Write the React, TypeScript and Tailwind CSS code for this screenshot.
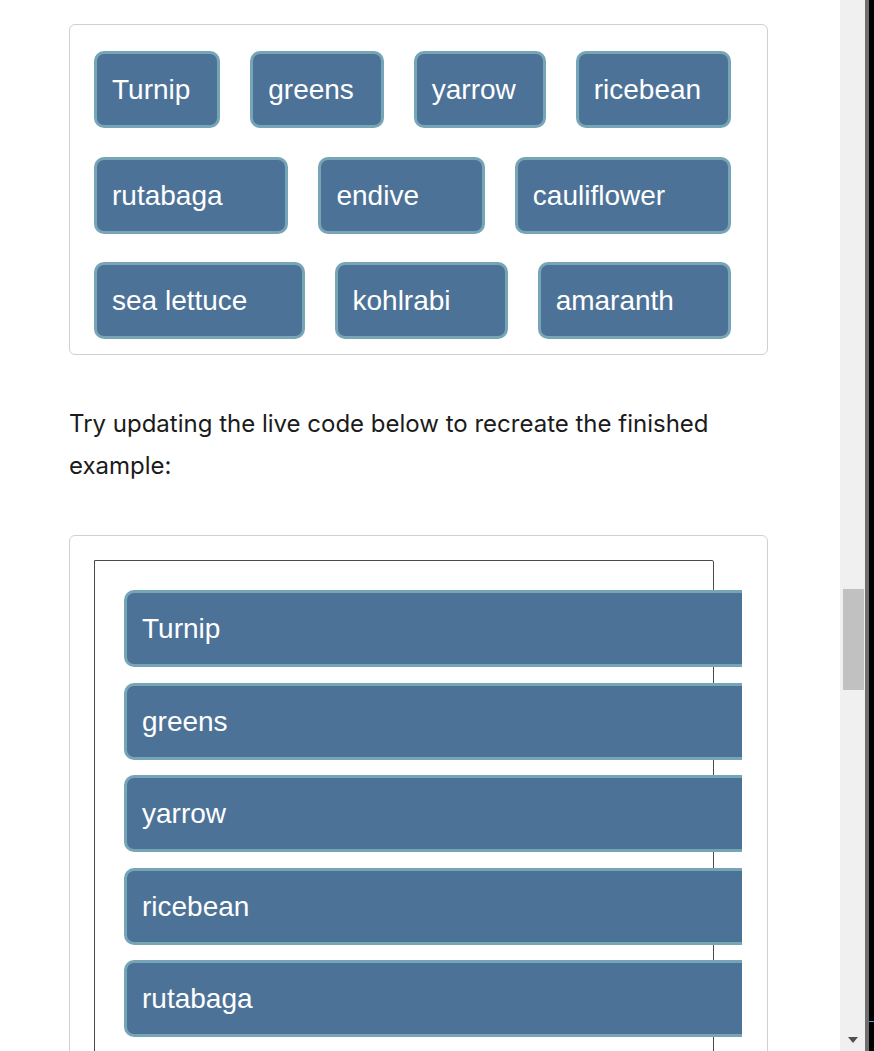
import React from "react";

const wrapItems = [
  "Turnip",
  "greens",
  "yarrow",
  "ricebean",
  "rutabaga",
  "endive",
  "cauliflower",
  "sea lettuce",
  "kohlrabi",
  "amaranth",
];

const listItems = ["Turnip", "greens", "yarrow", "ricebean", "rutabaga"];

// shared look of the veg boxes
const itemClass =
  "border-[3px] border-[#76a6b6] bg-[#4d7298] rounded-[10px] px-[15px] py-[15px] text-[28px] leading-[41px] text-white whitespace-nowrap";

const App = () => {
  return (
    <div className="flex h-[1051px] w-[874px] overflow-hidden bg-white">
      {/* page content */}
      <div className="w-[840px] shrink-0 overflow-hidden pl-[69px] pt-[24px]">
        {/* finished example */}
        <div className="w-[699px] rounded-[6px] border border-[#d0d0d0] pl-[24px] pt-[26px] pb-[15px]">
          <div
            className="flex w-[637px] flex-wrap gap-x-[30px] gap-y-[28.5px]"
            style={{ fontFamily: '"Liberation Sans", Arial, sans-serif' }}
          >
            {wrapItems.map((name) => (
              <div key={name} className={`${itemClass} flex-[1_1_auto]`}>
                {name}
              </div>
            ))}
          </div>
        </div>

        <p
          className="mt-[48px] w-[699px] text-[24px] leading-[42px] text-[#1b1b1b]"
          style={{ fontFamily: "Inter, 'Noto Sans', sans-serif" }}
        >
          Try updating the live code below to recreate the finished example:
        </p>

        {/* live code output */}
        <div className="mt-[48px] h-[700px] w-[699px] rounded-[6px] border border-[#d0d0d0] pl-[24px] pt-[24px]">
          <div className="w-[648px] overflow-hidden">
            <div
              className="h-[600px] w-[620px] rounded-tr-[2px] border border-[#4a4a4a] p-[14px]"
              style={{ fontFamily: '"Liberation Sans", Arial, sans-serif' }}
            >
              <div className="flex flex-col gap-[15.5px] pt-[15px] pl-[15px]">
                {listItems.map((name) => (
                  <div key={name} className={`${itemClass} w-[700px]`}>
                    {name}
                  </div>
                ))}
              </div>
            </div>
          </div>
        </div>
      </div>

      {/* scrollbar */}
      <div className="flex w-[25px] shrink-0 flex-col items-center bg-[#f0f0f0]">
        <div className="mt-[589px] ml-[1px] h-[101px] w-[21px] bg-[#c1c1c1]" />
        <div className="flex-1" />
        <svg width="10" height="6" viewBox="0 0 10 6" className="mb-[8px] ml-[1px]">
          <path d="M0 0 H10 L5 6 Z" fill="#505050" />
        </svg>
      </div>
      <div className="w-[4px] shrink-0 bg-[#6f6f6f]" />
      <div className="flex w-[5px] shrink-0 flex-col bg-black">
        <div className="mt-[1021px] h-[1px] bg-[#5aa0c8]" />
      </div>
    </div>
  );
};

export default App;
